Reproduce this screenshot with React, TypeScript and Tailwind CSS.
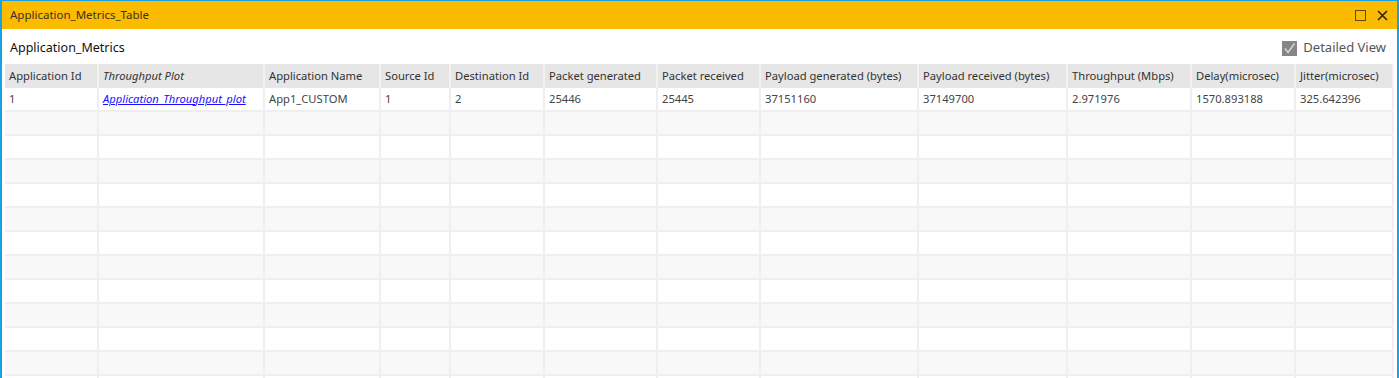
import React from "react";

const columns = [
  { name: "Application Id", w: 94 },
  { name: "Throughput Plot", w: 166, italic: true },
  { name: "Application Name", w: 116 },
  { name: "Source Id", w: 70 },
  { name: "Destination Id", w: 94 },
  { name: "Packet generated", w: 113 },
  { name: "Packet received", w: 103 },
  { name: "Payload generated (bytes)", w: 158 },
  { name: "Payload received (bytes)", w: 149 },
  { name: "Throughput (Mbps)", w: 124 },
  { name: "Delay(microsec)", w: 104 },
  { name: "Jitter(microsec)", w: 98 },
];

const firstRow = [
  "1",
  "Application_Throughput_plot",
  "App1_CUSTOM",
  "1",
  "2",
  "25446",
  "25445",
  "37151160",
  "37149700",
  "2.971976",
  "1570.893188",
  "325.642396",
];

const emptyRows = Array.from({ length: 12 });

export default function App() {
  return (
    <div className="h-[378px] w-[1399px] overflow-hidden bg-[#1ba1e2] pt-px px-[2px] font-['Noto_Sans',sans-serif]">
      <div className="flex h-full flex-col bg-white">
        {/* Title bar */}
        <div className="flex h-[28px] shrink-0 items-center justify-between bg-[#fabb00] pl-[8px] pr-[9px]">
          <span className="text-[11.5px] text-[#3a3320]">Application_Metrics_Table</span>
          <div className="flex items-center gap-[11px]">
            <svg width="11" height="11" viewBox="0 0 11 11">
              <rect x="0.5" y="0.5" width="10" height="10" fill="none" stroke="#5a4a1a" strokeWidth="1" />
            </svg>
            <svg width="11" height="11" viewBox="0 0 11 11">
              <path d="M1 1L10 10M10 1L1 10" stroke="#2d2410" strokeWidth="1.6" />
            </svg>
          </div>
        </div>

        {/* Header strip */}
        <div className="flex h-[35px] shrink-0 items-center justify-between pl-[8px] pr-[11px] pt-[3px]">
          <span className="text-[12.5px] text-[#111]">Application_Metrics</span>
          <label className="flex items-center gap-[6px]">
            <svg width="15" height="15" viewBox="0 0 15 15">
              <rect x="0" y="0" width="15" height="15" fill="#868686" />
              <path d="M3 7.5L6 11.5L12.5 2.5" fill="none" stroke="#d4d4d4" strokeWidth="1.6" />
            </svg>
            <span className="text-[13px] text-[#555]">Detailed View</span>
          </label>
        </div>

        {/* Table */}
        <div className="ml-[3px] mr-[4px] flex flex-col">
          <div className="flex h-[24px] bg-[#e6e6e6]">
            {columns.map((c) => (
              <div
                key={c.name}
                style={{ width: c.w }}
                className={`flex shrink-0 items-center border-r-2 border-[#f3f3f3] pl-[4px] text-[11.2px] text-[#333] whitespace-nowrap ${
                  c.italic ? "italic" : ""
                }`}
              >
                {c.name}
              </div>
            ))}
          </div>
          <div className="flex h-[24px] border-b-2 border-[#efefef] bg-white">
            {firstRow.map((v, i) => (
              <div
                key={i}
                style={{ width: columns[i].w }}
                className="flex shrink-0 items-center border-r-2 border-[#efefef] pl-[4px] text-[11.2px] text-[#444] whitespace-nowrap"
              >
                {i === 1 ? (
                  <span className="italic text-[#1a0dff] underline">{v}</span>
                ) : (
                  v
                )}
              </div>
            ))}
          </div>
          {emptyRows.map((_, r) => (
            <div
              key={r}
              className={`flex h-[24px] border-b-2 border-[#efefef] ${r % 2 === 0 ? "bg-[#f8f8f8]" : "bg-white"}`}
            >
              {columns.map((c) => (
                <div key={c.name} style={{ width: c.w }} className="shrink-0 border-r-2 border-[#efefef]" />
              ))}
            </div>
          ))}
        </div>
      </div>
    </div>
  );
}
